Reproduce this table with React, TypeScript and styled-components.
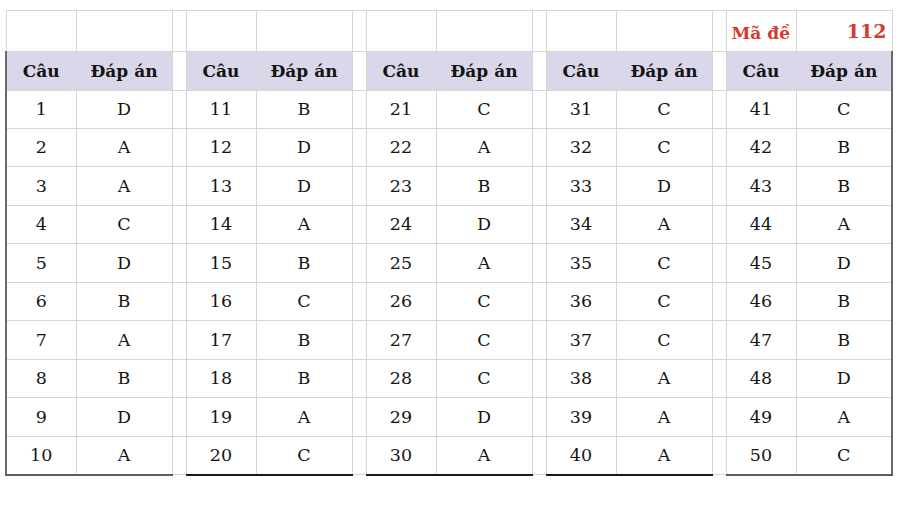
import React from "react";
import styled, { createGlobalStyle, css } from "styled-components";

const Global = createGlobalStyle`
  html, body { margin: 0; padding: 0; background: #ffffff; }
  body { font-family: "DejaVu Serif", "Liberation Serif", serif; color: #151515; }
`;

const Page = styled.div`
  padding: 10px 0 0 5px;
  width: 912px;
  height: 521px;
  box-sizing: border-box;
`;

const Sheet = styled.table`
  border-collapse: collapse;
  table-layout: fixed;
  width: 886px;
`;

const LIGHT = "#d6d6d6";

const Cell = styled.td<{
  $kind?: "num" | "ans" | "gap";
  $head?: boolean;
  $leftDark?: boolean;
  $rightDark?: boolean;
  $bottom?: "black" | "dark";
}>`
  border: 1px solid ${LIGHT};
  padding: 1px 0 0;
  text-align: center;
  vertical-align: middle;
  font-size: 17.5px;
  line-height: 1;
  color: #151515;
  ${(p) =>
    p.$head &&
    p.$kind !== "gap" &&
    css`
      background: #d9d7e9;
      font-weight: 700;
      font-size: 17px;
      color: #141414;
    `}
  ${(p) => p.$leftDark && css`border-left: 2px solid #6a6a6a;`}
  ${(p) => p.$rightDark && css`border-right: 2px solid #6a6a6a;`}
  ${(p) => p.$bottom === "black" && css`border-bottom: 2px solid #1a1a1a;`}
  ${(p) => p.$bottom === "dark" && css`border-bottom: 2px solid #5e5e5e;`}
`;

const TopRow = styled.tr`
  height: 41px;
`;
const HeadRow = styled.tr`
  height: 39px;
`;
const DataRow = styled.tr<{ $h: number }>`
  height: ${(p) => p.$h}px;
`;

const RedLabel = styled.td`
  border: 1px solid ${LIGHT};
  color: #d43a2e;
  font-weight: 700;
  font-size: 17px;
  text-align: left;
  padding: 4px 0 0 5px;
  vertical-align: middle;
`;
const RedNum = styled.td`
  border: 1px solid ${LIGHT};
  color: #d43a2e;
  font-weight: 700;
  font-size: 19px;
  text-align: right;
  padding: 0 5px 0 0;
  vertical-align: middle;
`;

const answers =
  "DAACDBABDA" + "BDDABCBBAC" + "CABDACCCDA" + "CCDACCCAAA" + "CBBADBBDAC";

const groups = [0, 1, 2, 3, 4];

export default function App() {
  const rowHeights = [38, 38, 39, 38, 39, 38, 39, 38, 39, 38];
  return (
    <>
      <Global />
      <Page>
        <Sheet>
          <colgroup>
            {groups.map((g) => (
              <React.Fragment key={g}>
                <col style={{ width: 70 }} />
                <col style={{ width: 96 }} />
                {g < 4 && <col style={{ width: 14 }} />}
              </React.Fragment>
            ))}
          </colgroup>
          <tbody>
            <TopRow>
              {groups.map((g) => (
                <React.Fragment key={g}>
                  {g < 4 ? (
                    <>
                      <Cell />
                      <Cell />
                      <Cell $kind="gap" />
                    </>
                  ) : (
                    <>
                      <RedLabel>Mã đề</RedLabel>
                      <RedNum>112</RedNum>
                    </>
                  )}
                </React.Fragment>
              ))}
            </TopRow>
            <HeadRow>
              {groups.map((g) => (
                <React.Fragment key={g}>
                  <Cell $head $kind="num" $leftDark={g === 0}>
                    Câu
                  </Cell>
                  <Cell $head $kind="ans" $rightDark={g === 4}>
                    Đáp án
                  </Cell>
                  {g < 4 && <Cell $head $kind="gap" />}
                </React.Fragment>
              ))}
            </HeadRow>
            {rowHeights.map((h, r) => {
              const last = r === 9;
              return (
                <DataRow key={r} $h={h}>
                  {groups.map((g) => {
                    const n = g * 10 + r + 1;
                    const bottom = last
                      ? g === 0 || g === 4
                        ? "dark"
                        : "black"
                      : undefined;
                    return (
                      <React.Fragment key={g}>
                        <Cell $kind="num" $leftDark={g === 0} $bottom={bottom}>
                          {n}
                        </Cell>
                        <Cell $kind="ans" $rightDark={g === 4} $bottom={bottom}>
                          {answers[n - 1]}
                        </Cell>
                        {g < 4 && <Cell $kind="gap" />}
                      </React.Fragment>
                    );
                  })}
                </DataRow>
              );
            })}
          </tbody>
        </Sheet>
      </Page>
    </>
  );
}
